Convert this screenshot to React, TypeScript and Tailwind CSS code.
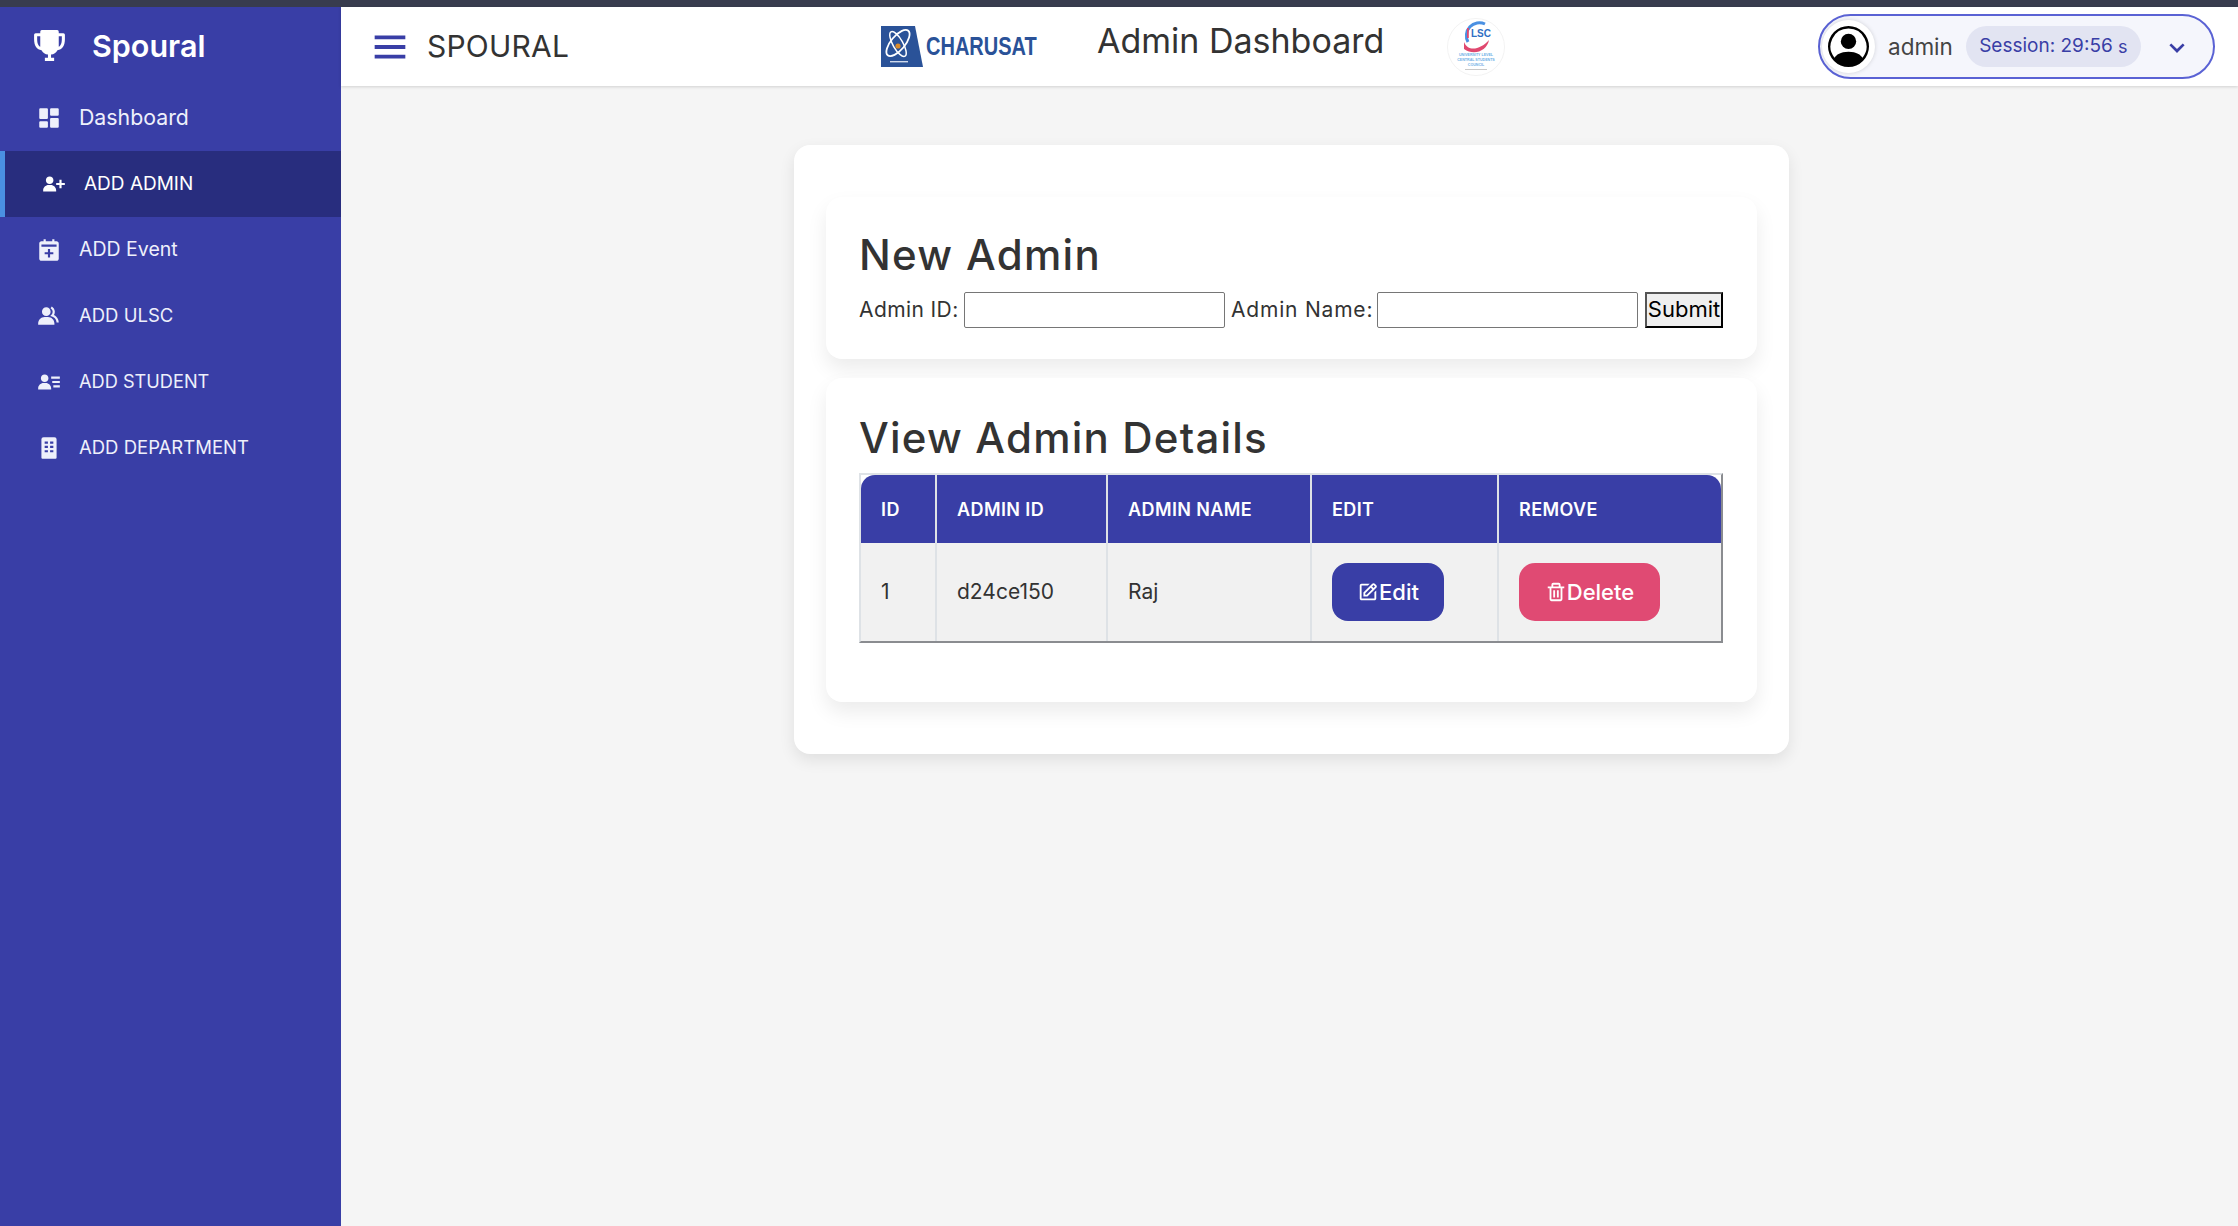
import React from "react";
import { BiSolidTrophy, BiSolidDashboard, BiSolidUserPlus, BiSolidCalendarPlus, BiSolidGroup, BiSolidUserDetail, BiSolidBuilding, BiMenu, BiChevronDown, BiEdit, BiTrash } from "react-icons/bi";
import { BsPersonCircle } from "react-icons/bs";

const font = "font-['Inter','Noto_Sans',sans-serif]";

function NavItem({ icon, label, active, size }: { icon: React.ReactNode; label: string; active?: boolean; size: string }) {
  return (
    <div className={active
      ? "h-[66px] flex items-center border-l-[5px] border-[#4a90e2] bg-[#282d7e] pl-[36px] text-white"
      : "h-[66px] flex items-center pl-[36px] text-[#eef0fb]"}>
      <span className="w-[43px] flex text-[26px]">{icon}</span>
      <span className={size}>{label}</span>
    </div>
  );
}

function CharusatLogo() {
  return (
    <svg viewBox="0 0 42 41" className="w-[42px] h-[41px] shrink-0">
      <polygon points="0,0 34,0 42,41 0,41" fill="#2a5298" />
      <ellipse cx="17" cy="17" rx="7" ry="16" fill="none" stroke="#fff" strokeWidth="1.8" transform="rotate(40 17 17)" />
      <ellipse cx="17" cy="18" rx="5" ry="14" fill="none" stroke="#fff" strokeWidth="1.5" transform="rotate(-30 17 18)" />
      <circle cx="17" cy="20" r="2.6" fill="#d98a2b" />
      <rect x="9" y="35" width="18" height="1.4" fill="#cfd9ec" />
    </svg>
  );
}

function UlscLogo() {
  return (
    <svg viewBox="0 0 58 58" className="w-[58px] h-[58px] shrink-0">
      <circle cx="29" cy="29" r="28.5" fill="#fff" stroke="#f3f3f3" />
      <path d="M21 24 A13 13 0 0 1 38 6" fill="none" stroke="#4a90e2" strokeWidth="3" />
      <path d="M17 24 C21 34 33 32 42 22 C40 33 27 38 17 31 Z" fill="#e0486f" />
      <text x="24" y="19" fontSize="10" fontWeight="700" fill="#2f6fc4" fontFamily="'Liberation Sans', sans-serif">LSC</text>
      <rect x="20" y="10" width="1.8" height="10" fill="#e0486f" />
      <text x="29" y="38" textAnchor="middle" fontSize="3.6" fontWeight="700" fill="#6fb0e6" fontFamily="'Liberation Sans', sans-serif">UNIVERSITY LEVEL</text>
      <text x="29" y="43" textAnchor="middle" fontSize="3.6" fontWeight="700" fill="#6fb0e6" fontFamily="'Liberation Sans', sans-serif">CENTRAL STUDENTS</text>
      <text x="29" y="48" textAnchor="middle" fontSize="3.6" fontWeight="700" fill="#6fb0e6" fontFamily="'Liberation Sans', sans-serif">COUNCIL</text>
      <rect x="18" y="51" width="22" height="1" fill="#c8c8c8" />
    </svg>
  );
}

export default function App() {
  return (
    <div className={`${font} w-full h-screen flex flex-col overflow-hidden text-[#333]`}>
      <div className="h-[7px] shrink-0 bg-[#383c4e]" />
      <div className="flex flex-1 min-h-0">
        <aside className="w-[341px] shrink-0 bg-[#393ea6] text-white">
          <div className="h-[78px] flex items-center pl-[31px] pb-[1px]">
            <BiSolidTrophy className="w-[37px] h-[37px]" />
            <span className="ml-[24px] text-[30.5px] font-semibold">Spoural</span>
          </div>
          <NavItem size="text-[21.3px]" icon={<BiSolidDashboard />} label="Dashboard" />
          <NavItem size="text-[19px]" active icon={<BiSolidUserPlus />} label="ADD ADMIN" />
          <NavItem size="text-[19.5px]" icon={<BiSolidCalendarPlus />} label="ADD Event" />
          <NavItem size="text-[18.5px]" icon={<BiSolidGroup />} label="ADD ULSC" />
          <NavItem size="text-[18.2px]" icon={<BiSolidUserDetail />} label="ADD STUDENT" />
          <NavItem size="text-[18.5px]" icon={<BiSolidBuilding />} label="ADD DEPARTMENT" />
        </aside>
        <div className="flex-1 min-w-0 bg-[#f5f5f5] flex flex-col">
          <header className="h-[79px] shrink-0 bg-white shadow-[0_1px_3px_rgba(0,0,0,0.15)] flex items-center pl-[26px] pr-[23px]">
            <BiMenu className="w-[46px] h-[46px] shrink-0 text-[#393ea6]" />
            <span className="ml-[14px] text-[30px] text-[#333] w-[454px] tracking-[0.2px]">SPOURAL</span>
            <CharusatLogo />
            <div className="ml-[3px] w-[171px] shrink-0">
              <span className="inline-block origin-left scale-x-[0.8] text-[25px] font-bold whitespace-nowrap text-[#2a5298] font-['Liberation_Sans',sans-serif]">CHARUSAT</span>
            </div>
            <span className="text-[34px] w-[350px] shrink-0 pb-[13px]">Admin Dashboard</span>
            <UlscLogo />
            <div className="ml-auto w-[397px] h-[65px] rounded-full border-2 border-[#5a62d4] bg-[#f5f6fc] flex items-center pl-[2px]">
              <div className="w-[53px] h-[53px] rounded-full bg-white shadow-[0_0_4px_rgba(0,0,0,0.15)] flex items-center justify-center">
                <BsPersonCircle className="w-[41px] h-[41px] text-black" />
              </div>
              <span className="ml-[13px] text-[22.5px] text-[#444]">admin</span>
              <div className="ml-[13px] w-[175px] h-[41px] rounded-full bg-[#e2e4f2] flex items-center justify-center text-[19px] text-[#393ea6]">
                Session: 29:56&nbsp;<span className="text-[18px]">s</span>
              </div>
              <BiChevronDown className="ml-[20px] w-[32px] h-[32px] text-[#393ea6]" />
            </div>
          </header>
          <main className="flex-1 min-h-0 pl-[453px] pt-[59px]">
            <div className="w-[995px] h-[609px] bg-white rounded-[16px] shadow-[0_6px_16px_rgba(0,0,0,0.09)] pt-[52px] px-[32px] flex flex-col gap-[19px]">
              <section className="h-[162px] rounded-[16px] bg-white shadow-[0_10px_20px_rgba(0,0,0,0.08)] pt-[28px] px-[33px]">
                <h2 className="text-[42px] leading-[60px] font-medium tracking-[1.3px] text-[#333]">New Admin</h2>
                <form className="flex items-center h-[37px] mt-[6px] text-[21px]">
                  <label className="tracking-[0.4px] w-[104px] whitespace-nowrap">Admin ID:</label>
                  <input className="ml-[1px] w-[261px] h-[36px] border border-[#767676] rounded-[2px] bg-white" />
                  <label className="ml-[6px] tracking-[0.8px] w-[146px] whitespace-nowrap">Admin Name:</label>
                  <input className="w-[261px] h-[36px] border border-[#767676] rounded-[2px] bg-white" />
                  <button type="button" className="ml-[7px] w-[78px] h-[36px] border-2 border-t-[#555] border-l-[#555] border-r-black border-b-black bg-[#efefef] text-black text-[22px] flex items-center justify-center">Submit</button>
                </form>
              </section>
              <section className="h-[324px] rounded-[16px] bg-white shadow-[0_10px_20px_rgba(0,0,0,0.08)] pt-[30px] px-[33px]">
                <h2 className="text-[42px] leading-[60px] font-medium tracking-[1.2px] text-[#333]">View Admin Details</h2>
                <table className="mt-[5px] w-[864px] table-fixed border-separate border-spacing-0 border-2 border-t-[#dee2e6] border-l-[#dee2e6] border-r-[#8a8c90] border-b-[#8a8c90]">
                  <colgroup>
                    <col className="w-[76px]" />
                    <col className="w-[171px]" />
                    <col className="w-[204px]" />
                    <col className="w-[187px]" />
                    <col />
                  </colgroup>
                  <thead>
                    <tr className="h-[68px] text-white text-[18px] font-semibold text-left tracking-[0.4px]">
                      <th className="bg-[#393ea6] rounded-tl-[14px] border-r-2 border-[#dee2e6] pl-[20px] font-semibold">ID</th>
                      <th className="bg-[#393ea6] border-r-2 border-[#dee2e6] pl-[20px] font-semibold">ADMIN ID</th>
                      <th className="bg-[#393ea6] border-r-2 border-[#dee2e6] pl-[20px] font-semibold">ADMIN NAME</th>
                      <th className="bg-[#393ea6] border-r-2 border-[#dee2e6] pl-[20px] font-semibold">EDIT</th>
                      <th className="bg-[#393ea6] rounded-tr-[14px] pl-[20px] font-semibold">REMOVE</th>
                    </tr>
                  </thead>
                  <tbody>
                    <tr className="h-[98px] text-[21px] text-[#333]">
                      <td className="bg-[#f1f1f1] border-r-2 border-[#dee2e6] pl-[20px]">1</td>
                      <td className="bg-[#f1f1f1] border-r-2 border-[#dee2e6] pl-[20px]">d24ce150</td>
                      <td className="bg-[#f1f1f1] border-r-2 border-[#dee2e6] pl-[20px]">Raj</td>
                      <td className="bg-[#f1f1f1] border-r-2 border-[#dee2e6] pl-[20px]">
                        <button type="button" className="w-[112px] h-[58px] rounded-[16px] bg-[#393ea6] text-white text-[22px] flex items-center justify-center font-medium">
                          <BiEdit className="w-[22px] h-[22px]" />Edit
                        </button>
                      </td>
                      <td className="bg-[#f1f1f1] pl-[20px]">
                        <button type="button" className="w-[141px] h-[58px] rounded-[16px] bg-[#e04a73] text-white text-[22px] flex items-center justify-center font-medium">
                          <BiTrash className="w-[22px] h-[22px]" />Delete
                        </button>
                      </td>
                    </tr>
                  </tbody>
                </table>
              </section>
            </div>
          </main>
        </div>
      </div>
    </div>
  );
}
